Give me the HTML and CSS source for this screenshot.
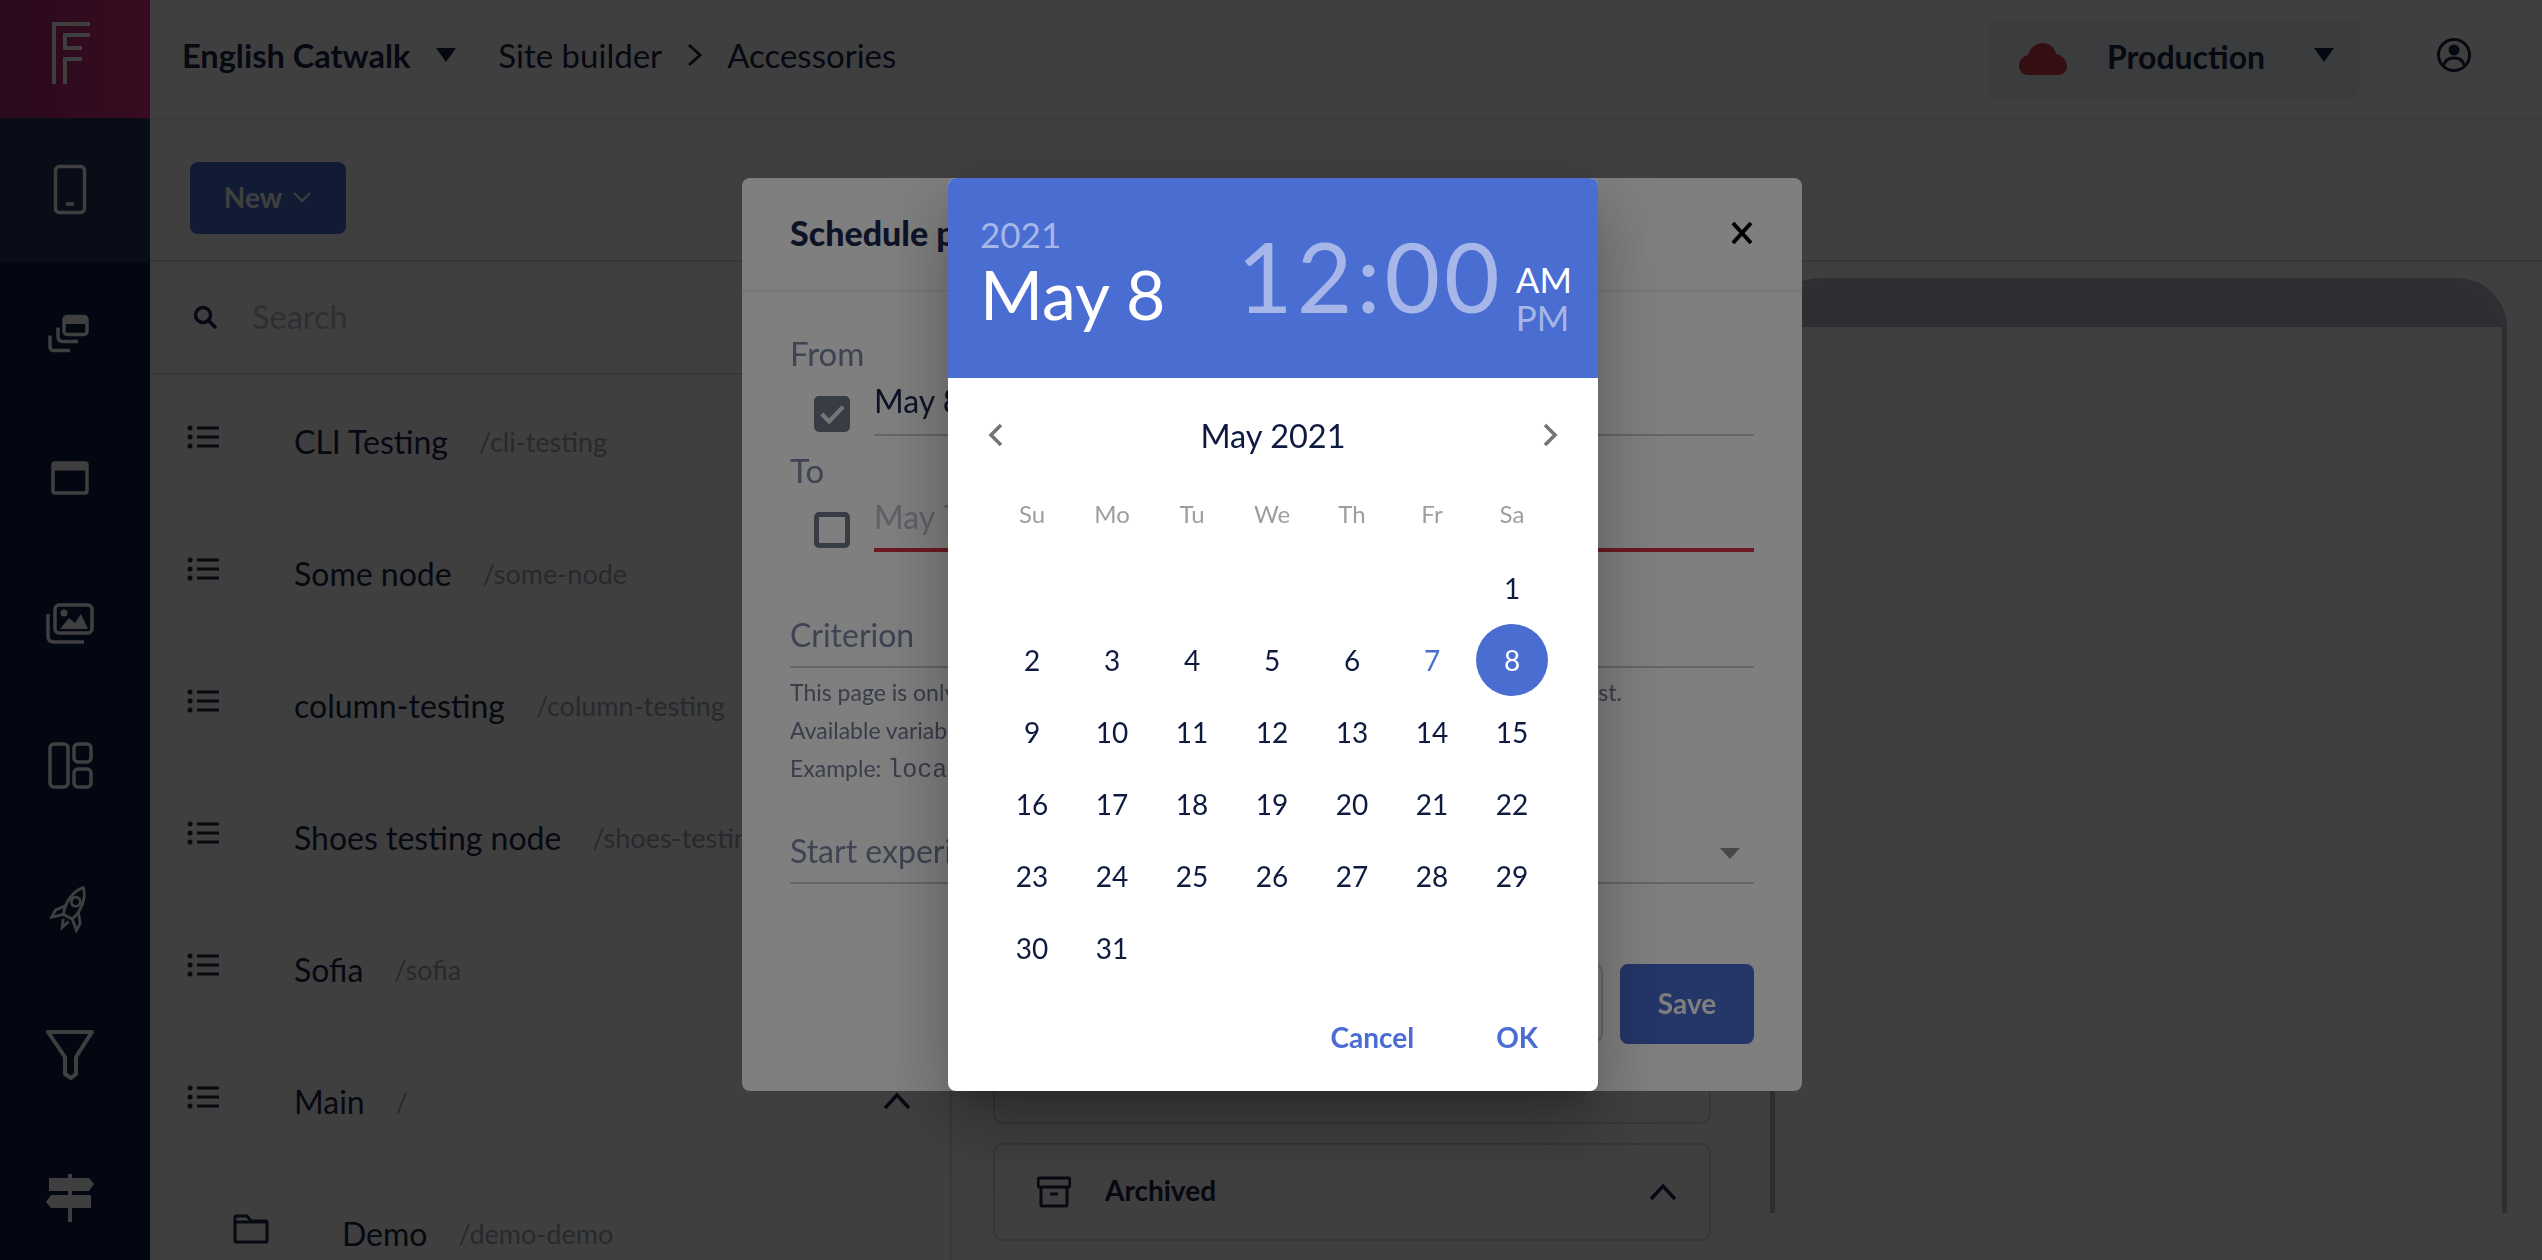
FILE: index.html
```html
<!DOCTYPE html>
<html lang="en">
<head>
    <meta charset="UTF-8">
    <title>Site builder - Accessories</title>
    <link rel="stylesheet" href="styles.css">
</head>
<body>
    <div class="app">
        <aside class="sidebar">
            <div class="logo">
                <svg width="40" height="64" viewBox="0 0 40 64" fill="none" stroke="#fff" stroke-width="4"><path d="M4 64V4H40M40 15H15V28H32M32 39H15V64"/></svg>
            </div>
            <div class="nav-item nav-item-active">
                <svg width="48" height="52" viewBox="0 0 48 52" fill="none" stroke="#fff" stroke-width="3.5"><rect x="9.5" y="2.5" width="29" height="46" rx="4"/><path d="M20 40H28"/></svg>
            </div>
            <div class="nav-item">
                <svg width="48" height="52" viewBox="0 -1.5 48 52" fill="none" stroke="#fff" stroke-width="3.5"><rect x="18" y="7" width="23" height="18" rx="3"/><path d="M18 11H41" stroke-width="7"/><path d="M12 18V27Q12 32 17 32H32M4 26V37Q4 41 8 41H24"/></svg>
            </div>
            <div class="nav-item">
                <svg width="48" height="52" viewBox="0 0 48 52" fill="none" stroke="#fff" stroke-width="3.5"><rect x="7" y="11" width="34" height="30" rx="2"/><path d="M7 15H41" stroke-width="7"/></svg>
            </div>
            <div class="nav-item">
                <svg width="48" height="52" viewBox="0 -3 48 52" fill="none" stroke="#fff" stroke-width="3.5"><rect x="9" y="6" width="37" height="28" rx="4"/><path d="M2 15V37Q2 43 8 43H38"/><circle cx="18" cy="14" r="3.5" fill="#fff" stroke="none"/><path d="M14 30L23 19L29 24L35 15L42 30Z" fill="#fff" stroke="none"/></svg>
            </div>
            <div class="nav-item">
                <svg width="48" height="52" viewBox="0 0 48 52" fill="none" stroke="#fff" stroke-width="3.5"><rect x="4" y="4" width="18" height="43" rx="4"/><rect x="28" y="4" width="17" height="18" rx="4"/><rect x="28" y="29" width="17" height="18" rx="4"/></svg>
            </div>
            <div class="nav-item">
                <svg width="48" height="52" viewBox="-3 3 48 52" fill="none" stroke="#fff" stroke-width="2.8"><g transform="rotate(28 24 26)"><path d="M24 4C32 12 33 26 29 37H19C15 26 16 12 24 4Z"/><circle cx="24" cy="20" r="4.5"/><path d="M17 28L10 37V45L19 37M31 28L38 37V45L29 37M21 41L24 49L27 41"/></g></svg>
            </div>
            <div class="nav-item">
                <svg width="48" height="52" viewBox="0 0 48 52" fill="none" stroke="#fff" stroke-width="4" stroke-linejoin="round"><path d="M2 4H46L30 29V46L25 50L19 46V29Z"/></svg>
            </div>
            <div class="nav-item">
                <svg width="48" height="52" viewBox="0 0 48 52" fill="#fff"><path d="M22 2H26V6H43L48 12L43 19H3V6H22Z"/><path d="M5 23H45V36H5L0 30Z"/><path d="M22 19H26V23H22ZM22 36H26V50H22Z"/></svg>
            </div>
        </aside>

        <div class="main">
            <header class="topbar">
                <span class="site-name">English Catwalk</span>
                <span class="caret"></span>
                <span class="crumb crumb-first">Site builder</span>
                <svg class="crumb-sep" width="17" height="24" viewBox="0 0 17 24" fill="none" stroke="#1f2940" stroke-width="3"><path d="M3 2L14 12L3 22"/></svg>
                <span class="crumb">Accessories</span>
                <div class="env">
                    <svg width="48" height="32" viewBox="0 0 48 32" fill="#d63b4a"><path d="M24 0C31 0 36 5 37 11C43 12 48 17 48 23C48 29 44 32 38 32H9C4 32 0 28 0 23C0 17 4 13 9 12C11 5 17 0 24 0Z"/></svg>
                    <span class="env-name">Production</span>
                    <span class="caret"></span>
                </div>
                <svg class="user" width="36" height="36" viewBox="0 0 36 36" fill="none" stroke="#1a2548" stroke-width="3"><circle cx="18" cy="18" r="15.5"/><circle cx="18" cy="13" r="5.5" fill="#1a2548" stroke="none"/><path d="M8 28C9 23 13 21 18 21C23 21 27 23 28 28"/></svg>
            </header>

            <div class="toolbar">
                <button class="btn btn-new">New
                    <svg width="20" height="12" viewBox="0 0 20 12" fill="none" stroke="#fff" stroke-width="2"><path d="M2 2L10 10L18 2"/></svg>
                </button>
            </div>

            <div class="content">
                <section class="tree">
                    <div class="search">
                        <svg width="26" height="26" viewBox="0 0 26 26" fill="none" stroke="#1a2548" stroke-width="3.5"><circle cx="11" cy="11" r="7.5"/><path d="M16 16L24 24"/></svg>
                        <span>Search</span>
                    </div>

                    <div class="row">
                        <svg class="list-icon" width="32" height="26" viewBox="0 0 32 26" fill="none" stroke="#1f2940" stroke-width="3"><path d="M10 4H32M10 13H32M10 22H32"/><circle cx="3" cy="4" r="2.5" fill="#1f2940" stroke="none"/><circle cx="3" cy="13" r="2.5" fill="#1f2940" stroke="none"/><circle cx="3" cy="22" r="2.5" fill="#1f2940" stroke="none"/></svg>
                        <span class="row-title">CLI Testing</span>
                        <span class="row-slug">/cli-testing</span>
                    </div>
                    <div class="row">
                        <svg class="list-icon" width="32" height="26" viewBox="0 0 32 26" fill="none" stroke="#1f2940" stroke-width="3"><path d="M10 4H32M10 13H32M10 22H32"/><circle cx="3" cy="4" r="2.5" fill="#1f2940" stroke="none"/><circle cx="3" cy="13" r="2.5" fill="#1f2940" stroke="none"/><circle cx="3" cy="22" r="2.5" fill="#1f2940" stroke="none"/></svg>
                        <span class="row-title">Some node</span>
                        <span class="row-slug">/some-node</span>
                    </div>
                    <div class="row">
                        <svg class="list-icon" width="32" height="26" viewBox="0 0 32 26" fill="none" stroke="#1f2940" stroke-width="3"><path d="M10 4H32M10 13H32M10 22H32"/><circle cx="3" cy="4" r="2.5" fill="#1f2940" stroke="none"/><circle cx="3" cy="13" r="2.5" fill="#1f2940" stroke="none"/><circle cx="3" cy="22" r="2.5" fill="#1f2940" stroke="none"/></svg>
                        <span class="row-title">column-testing</span>
                        <span class="row-slug">/column-testing</span>
                    </div>
                    <div class="row">
                        <svg class="list-icon" width="32" height="26" viewBox="0 0 32 26" fill="none" stroke="#1f2940" stroke-width="3"><path d="M10 4H32M10 13H32M10 22H32"/><circle cx="3" cy="4" r="2.5" fill="#1f2940" stroke="none"/><circle cx="3" cy="13" r="2.5" fill="#1f2940" stroke="none"/><circle cx="3" cy="22" r="2.5" fill="#1f2940" stroke="none"/></svg>
                        <span class="row-title">Shoes testing node</span>
                        <span class="row-slug">/shoes-testing-node</span>
                    </div>
                    <div class="row">
                        <svg class="list-icon" width="32" height="26" viewBox="0 0 32 26" fill="none" stroke="#1f2940" stroke-width="3"><path d="M10 4H32M10 13H32M10 22H32"/><circle cx="3" cy="4" r="2.5" fill="#1f2940" stroke="none"/><circle cx="3" cy="13" r="2.5" fill="#1f2940" stroke="none"/><circle cx="3" cy="22" r="2.5" fill="#1f2940" stroke="none"/></svg>
                        <span class="row-title">Sofia</span>
                        <span class="row-slug">/sofia</span>
                    </div>
                    <div class="row">
                        <svg class="list-icon" width="32" height="26" viewBox="0 0 32 26" fill="none" stroke="#1f2940" stroke-width="3"><path d="M10 4H32M10 13H32M10 22H32"/><circle cx="3" cy="4" r="2.5" fill="#1f2940" stroke="none"/><circle cx="3" cy="13" r="2.5" fill="#1f2940" stroke="none"/><circle cx="3" cy="22" r="2.5" fill="#1f2940" stroke="none"/></svg>
                        <span class="row-title">Main</span>
                        <span class="row-slug">/</span>
                        <svg class="row-toggle" width="28" height="18" viewBox="0 0 28 18" fill="none" stroke="#1a2548" stroke-width="3.5"><path d="M2 16L14 3L26 16"/></svg>
                    </div>
                    <div class="row row-child">
                        <svg class="list-icon" width="36" height="30" viewBox="0 0 36 30" fill="none" stroke="#1f2940" stroke-width="3"><path d="M2 7V3Q2 2 3 2H14L18 7H33Q34 7 34 8V27Q34 28 33 28H3Q2 28 2 27Z"/><path d="M2 8H34"/></svg>
                        <span class="row-title">Demo</span>
                        <span class="row-slug">/demo-demo</span>
                    </div>
                </section>

                <section class="preview">
                    <div class="cards">
                        <div class="card card-tall"></div>
                        <div class="card">
                            <svg width="34" height="32" viewBox="0 0 34 32" fill="none" stroke="#1f2940" stroke-width="3"><rect x="1" y="2" width="32" height="9" rx="2"/><path d="M4 11V29Q4 30 5 30H29Q30 30 30 29V11M13 18H21"/></svg>
                            <span class="card-title">Archived</span>
                            <svg class="card-toggle" width="28" height="18" viewBox="0 0 28 18" fill="none" stroke="#1a2548" stroke-width="3.5"><path d="M2 16L14 3L26 16"/></svg>
                        </div>
                    </div>
                    <div class="device">
                        <div class="device-bar"></div>
                    </div>
                </section>
            </div>
        </div>
    </div>

    <div class="layer layer-modal">
        <div class="modal">
            <div class="modal-head">
                <h2>Schedule page</h2>
                <svg width="24" height="24" viewBox="0 0 24 24" fill="none" stroke="#000" stroke-width="4"><path d="M3 2L21 22M21 2L3 22"/></svg>
            </div>
            <div class="modal-body">
                <label class="field-label">From</label>
                <div class="date-row">
                    <span class="check check-on">
                        <svg width="28" height="24" viewBox="0 0 28 24" fill="none" stroke="#fff" stroke-width="4.5" opacity="0.85"><path d="M3 12L11 20L26 4"/></svg>
                    </span>
                    <div class="input">May 8, 2021</div>
                </div>
                <label class="field-label field-label-to">To</label>
                <div class="date-row date-row-to">
                    <span class="check"></span>
                    <div class="input input-error">May 7</div>
                </div>
                <div class="input input-criterion">Criterion</div>
                <div class="help">
                    <p>This page is only shown when the criterion evaluates to true for the actual request.</p>
                    <p>Available variables</p>
                    <p>Example: <code>location</code></p>
                </div>
                <div class="input input-select">
                    Start experiment
                    <span class="caret caret-small"></span>
                </div>
            </div>
            <div class="modal-foot">
                <button class="btn btn-outline">Cancel</button>
                <button class="btn btn-save">Save</button>
            </div>
        </div>
    </div>

    <div class="layer layer-picker">
        <div class="picker">
            <div class="picker-head">
                <div class="picker-date">
                    <div class="picker-year">2021</div>
                    <div class="picker-day">May 8</div>
                </div>
                <div class="picker-time">12:00</div>
                <div class="picker-ampm">
                    <span class="on">AM</span>
                    <span>PM</span>
                </div>
            </div>
            <div class="month">
                <svg width="16" height="24" viewBox="0 0 16 24" fill="none" stroke="#757575" stroke-width="3.6"><path d="M14 2L4 12L14 22"/></svg>
                <span>May 2021</span>
                <svg width="16" height="24" viewBox="0 0 16 24" fill="none" stroke="#757575" stroke-width="3.6"><path d="M2 2L12 12L2 22"/></svg>
            </div>
            <div class="weekdays">
                <span>Su</span><span>Mo</span><span>Tu</span><span>We</span><span>Th</span><span>Fr</span><span>Sa</span>
            </div>
            <div class="days">
                <span></span><span></span><span></span><span></span><span></span><span></span><span>1</span>
                <span>2</span><span>3</span><span>4</span><span>5</span><span>6</span><span class="today">7</span><span class="selected">8</span>
                <span>9</span><span>10</span><span>11</span><span>12</span><span>13</span><span>14</span><span>15</span>
                <span>16</span><span>17</span><span>18</span><span>19</span><span>20</span><span>21</span><span>22</span>
                <span>23</span><span>24</span><span>25</span><span>26</span><span>27</span><span>28</span><span>29</span>
                <span>30</span><span>31</span>
            </div>
            <div class="picker-foot">
                <button class="link">Cancel</button>
                <button class="link">OK</button>
            </div>
        </div>
    </div>
</body>
</html>
```

FILE: styles.css
```css
* {
    box-sizing: border-box;
}

body {
    margin: 0;
    height: 1260px;
    overflow: hidden;
    background: #fff;
    color: #1a2548;
    font-family: "Lato", "Noto Sans", sans-serif;
}

button {
    font-family: inherit;
}

.app {
    display: flex;
    height: 1260px;
}

/* sidebar */
.sidebar {
    width: 150px;
    flex: none;
    background: #081c44;
}

.logo {
    height: 118px;
    display: flex;
    align-items: center;
    justify-content: center;
    padding-right: 10px;
    padding-bottom: 14px;
    background: linear-gradient(90deg, #a82878 0%, #e03080 100%);
}

.nav-item {
    height: 144px;
    display: flex;
    align-items: center;
    justify-content: center;
    padding-right: 10px;
}

.nav-item-active {
    background: #243460;
}

/* top bar */
.main {
    flex: 1;
    min-width: 0;
    display: flex;
    flex-direction: column;
}

.topbar {
    height: 118px;
    flex: none;
    display: flex;
    align-items: center;
    padding-left: 32px;
    padding-right: 70px;
    padding-bottom: 8px;
    font-size: 33px;
}

.site-name {
    font-weight: 700;
    font-size: 32.5px;
}

.caret {
    width: 0;
    height: 0;
    border-left: 10px solid transparent;
    border-right: 10px solid transparent;
    border-top: 14px solid #1a2548;
}

.topbar > .caret {
    margin-left: 26px;
}

.crumb-first {
    margin-left: 42px;
}

.crumb-sep {
    margin: 0 24px;
}

.env {
    margin-left: auto;
    margin-top: 8px;
    width: 372px;
    height: 80px;
    display: flex;
    align-items: center;
    padding-left: 32px;
    border-radius: 8px;
    background: #ecf0f5;
}

.env-name {
    margin-left: 40px;
    margin-right: 49px;
    padding-bottom: 5px;
    font-weight: 700;
    font-size: 32px;
}

.env .caret {
    margin-bottom: 8px;
}

.user {
    margin-left: 77px;
}

/* toolbar */
.toolbar {
    height: 144px;
    flex: none;
    display: flex;
    align-items: center;
    padding-left: 40px;
    padding-top: 16px;
    border-top: 2px solid #f2f2f2;
    border-bottom: 2px solid #d8d8d8;
}

.btn {
    border: none;
    border-radius: 8px;
    font-weight: 700;
    font-size: 28px;
}

.btn-new {
    width: 156px;
    height: 72px;
    display: flex;
    align-items: center;
    justify-content: center;
    gap: 10px;
    padding-bottom: 3px;
    background: #4a6dd2;
    color: #fff;
}

/* tree */
.content {
    flex: 1;
    min-height: 0;
    display: flex;
}

.tree {
    width: 802px;
    flex: none;
    overflow: hidden;
    border-right: 2px solid #e0e0e0;
}

.search {
    height: 113px;
    display: flex;
    align-items: center;
    gap: 34px;
    padding-left: 42px;
    padding-bottom: 2px;
    border-bottom: 2px solid #d8d8d8;
    font-size: 32.5px;
    color: #b8bcc8;
}

.row {
    position: relative;
    height: 132px;
    display: flex;
    align-items: center;
    padding-left: 37px;
    white-space: nowrap;
}

.list-icon {
    flex: none;
    margin-top: -8px;
    margin-right: 75px;
}

.row-title {
    font-size: 32px;
}

.row-slug {
    margin-left: 31px;
    font-size: 27px;
    color: #a0a4b4;
}

.row-child {
    padding-left: 83px;
}

.row-child .list-icon {
    margin-right: 73px;
}

.row-toggle {
    position: absolute;
    left: 733px;
    top: 57px;
}

/* right side */
.preview {
    flex: 1;
    min-width: 0;
    display: flex;
    padding: 16px 35px 0 41px;
}

.cards {
    width: 718px;
    flex: none;
    display: flex;
    flex-direction: column;
    justify-content: flex-end;
    gap: 19px;
    padding-bottom: 19px;
}

.card {
    height: 98px;
    display: flex;
    align-items: center;
    padding-left: 42px;
    padding-right: 32px;
    border: 2px solid #dcdcdc;
    border-radius: 10px;
}

.card-tall {
    height: 240px;
}

.card-title {
    margin-left: 34px;
    margin-bottom: 4px;
    font-weight: 700;
    font-size: 28px;
}

.card-toggle {
    margin-left: auto;
}

.device {
    margin-left: 59px;
    width: 737px;
    height: 935px;
    border: 5px solid #b8bccc;
    border-bottom: none;
    border-radius: 50px 50px 0 0;
    overflow: hidden;
}

.device-bar {
    height: 44px;
    background: #b8bccc;
}

/* overlays */
.layer {
    position: fixed;
    inset: 0;
    display: flex;
    justify-content: center;
    align-items: flex-start;
    padding-top: 178px;
    background: rgba(0, 0, 0, 0.5);
}

.layer-modal {
    padding-left: 2px;
}

.layer-picker {
    padding-left: 4px;
}

/* modal */
.modal {
    width: 1060px;
    height: 913px;
    display: flex;
    flex-direction: column;
    border-radius: 8px;
    background: #fff;
}

.modal-head {
    height: 114px;
    flex: none;
    display: flex;
    align-items: center;
    justify-content: space-between;
    padding: 0 48px;
    padding-bottom: 3px;
    border-bottom: 2px solid #eee;
}

.modal-head h2 {
    margin: 0;
    font-size: 34px;
    font-weight: 900;
    color: #1c2850;
}

.modal-body {
    flex: 1;
    padding: 42px 48px 0;
}

.field-label {
    display: block;
    height: 38px;
    line-height: 38px;
    font-size: 33px;
    color: #7c88a4;
}

.field-label-to {
    margin-top: 15px;
}

.date-row {
    display: flex;
    align-items: flex-end;
    gap: 24px;
    padding-left: 24px;
    margin-top: 4px;
}

.date-row-to {
    margin-top: 4px;
}

.check {
    width: 36px;
    height: 36px;
    flex: none;
    display: flex;
    align-items: center;
    justify-content: center;
    margin-bottom: 4px;
    border: 5px solid #70788a;
    border-radius: 5px;
}

.check-on {
    background: #70788a;
}

.input {
    flex: 1;
    height: 60px;
    line-height: 50px;
    border-bottom: 2px solid #c8ccd8;
    font-size: 32px;
    color: #1c2850;
    white-space: nowrap;
}

.input-error {
    height: 59px;
    line-height: 48px;
    border-bottom: 4px solid #dc3545;
    color: #c0c4d0;
}

.input-criterion {
    height: 60px;
    margin-top: 56px;
    line-height: 54px;
    color: #7c88a4;
}

.help {
    margin-top: 5px;
    font-size: 23px;
    color: #747c96;
}

.help p {
    margin: 0;
    height: 38px;
    line-height: 38px;
    white-space: nowrap;
}

.help code {
    font-family: "Liberation Mono", monospace;
    font-size: 25px;
}

.input-select {
    position: relative;
    height: 56px;
    margin-top: 41px;
    line-height: 46px;
    color: #7c88a4;
}

.caret-small {
    position: absolute;
    right: 14px;
    top: 20px;
    border-top: 11px solid #909090;
}

.modal-foot {
    height: 127px;
    flex: none;
    display: flex;
    justify-content: flex-end;
    gap: 17px;
    padding-right: 48px;
}

.btn-save {
    width: 134px;
    height: 80px;
    padding-bottom: 3px;
    background: #4a6dd2;
    color: #fff;
}

.btn-outline {
    width: 134px;
    height: 78px;
    border: 2px solid #d8d8d8;
    background: #fff;
    color: #7c88a4;
}

/* date picker */
.picker {
    width: 650px;
    height: 913px;
    overflow: hidden;
    border-radius: 8px;
    background: #fff;
    box-shadow: 0 19px 26px -12px rgba(0, 0, 0, 0.2), 0 42px 66px 5px rgba(0, 0, 0, 0.14), 0 16px 80px 14px rgba(0, 0, 0, 0.12);
}

.picker-head {
    height: 200px;
    display: flex;
    padding-left: 32px;
    padding-right: 26px;
    background: #4a6dd2;
    color: #fff;
}

.picker-date {
    padding-top: 36px;
}

.picker-year {
    font-size: 35px;
    line-height: 40px;
    color: #a6b6e8;
}

.picker-day {
    margin-top: 4px;
    font-size: 68px;
    line-height: 72px;
}

.picker-time {
    margin-left: auto;
    padding-top: 42px;
    font-size: 96px;
    line-height: 112px;
    letter-spacing: 4px;
    color: #a6b6e8;
}

.picker-ampm {
    margin-left: 12px;
    padding-top: 82px;
    display: flex;
    flex-direction: column;
    font-size: 35px;
    line-height: 38px;
    color: #a6b6e8;
}

.picker-ampm .on {
    color: #fff;
}

.month {
    height: 112px;
    display: flex;
    align-items: center;
    justify-content: space-between;
    padding: 0 39px;
    padding-top: 2px;
    font-size: 32.5px;
    color: #0f1a40;
}

.weekdays,
.days {
    display: grid;
    grid-template-columns: repeat(7, 72px);
    column-gap: 8px;
    padding-left: 48px;
}

.weekdays {
    height: 46px;
    margin-bottom: 16px;
    align-items: center;
    font-size: 24px;
    color: #9e9e9e;
    text-align: center;
}

.days {
    grid-auto-rows: 72px;
    font-size: 28px;
    color: #0f1a40;
}

.days span {
    display: flex;
    align-items: center;
    justify-content: center;
    border-radius: 50%;
}

.days .today {
    color: #4a6dd2;
}

.days .selected {
    background: #4a6dd2;
    color: #fff;
}

.picker-foot {
    display: flex;
    justify-content: flex-end;
    gap: 82px;
    padding: 36px 60px 0 0;
}

.link {
    padding: 0;
    border: none;
    background: none;
    font-size: 28px;
    font-weight: 700;
    color: #4a6dd2;
}
```
